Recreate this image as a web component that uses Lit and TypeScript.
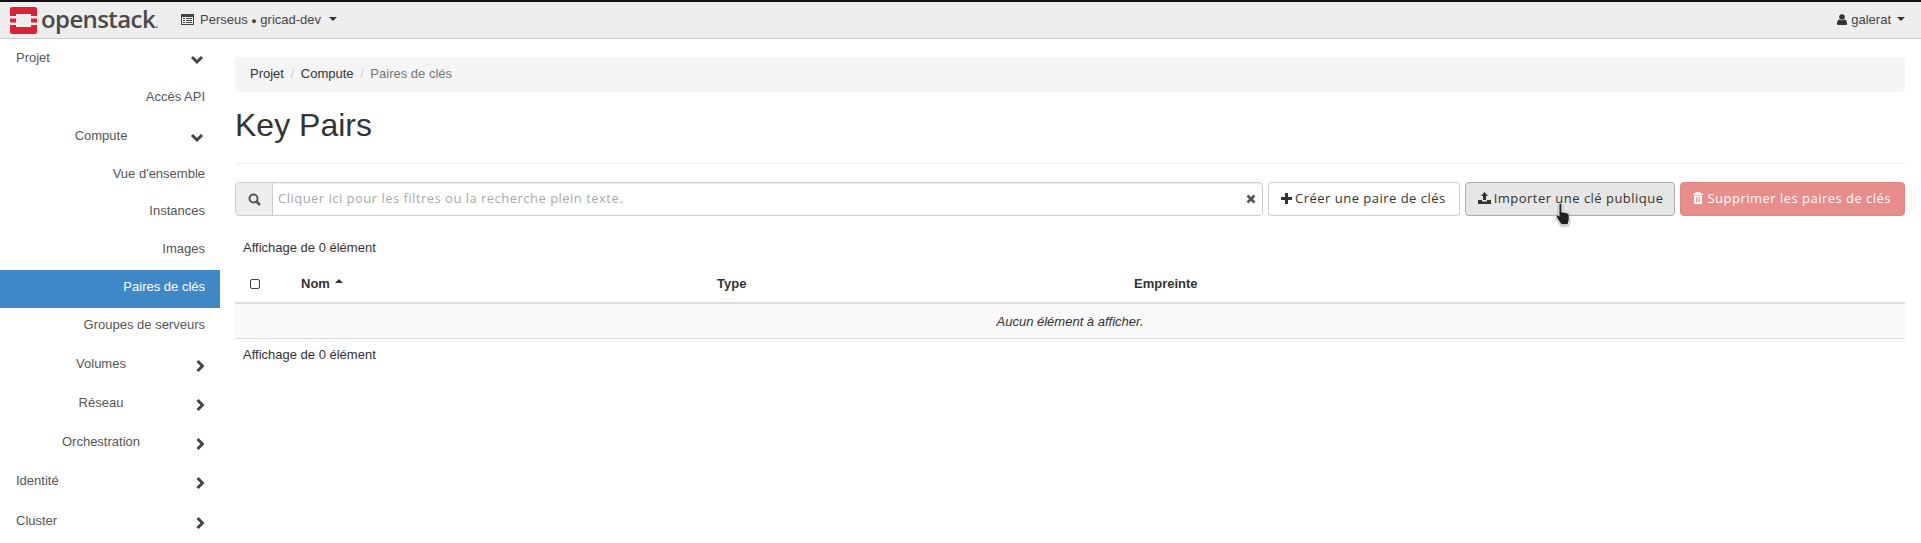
import { LitElement, html, css } from "lit";
import { customElement } from "lit/decorators.js";

const chevDown = html`<svg class="chev" viewBox="0 0 14 10" width="14" height="10"><path d="M2 2 7 7 12 2" fill="none" stroke="#444" stroke-width="3"/></svg>`;
const chevRight = html`<svg class="chev" viewBox="0 0 10 14" width="10" height="14"><path d="M3.500 2 8.500 7 3.500 12" fill="none" stroke="#444" stroke-width="3"/></svg>`;

@customElement("app-root")
export class AppRoot extends LitElement {
  static styles = css`
    :host { display: block; width: 1921px; height: 543px; overflow: hidden; background: #fff; font-family: "Liberation Sans", Arial, sans-serif; font-size: 13px; color: #333; }
    .nav { height: 36px; border-top: 2px solid #111; border-bottom: 1px solid #ccc; background: #eee; display: flex; align-items: center; padding: 0 10px; box-sizing: content-box; color: #444; }
    .logo { display: flex; align-items: center; width: 171px; }
    .wordmark { font-family: "Open Sans", sans-serif; font-weight: 600; font-size: 24px; color: #4a4a4a; margin-left: 4px; margin-bottom: 2px; letter-spacing: -0.6px; line-height: 1; }
    .wordmark i { font-style: normal; font-size: 12px; color: #777; letter-spacing: 0; }
    .proj { display: flex; align-items: center; gap: 6px; padding-bottom: 2px; }
    .right { margin-left: auto; display: flex; align-items: center; gap: 4px; margin-right: 6px; padding-bottom: 2px; }
    .caret { display: inline-block; border-left: 4px solid transparent; border-right: 4px solid transparent; border-top: 4px solid #333; margin-left: 2px; }
    .body { display: flex; }
    .side { width: 220px; flex: none; padding-top: 0.5px; color: #555; }
    .row { height: 39px; padding-bottom: 4px; display: flex; align-items: center; box-sizing: border-box; }
    .row.h395 { height: 39.5px; }
    .row.h385 { height: 38.5px; }
    .row.h375 { height: 37.5px; }
    .row.h38 { height: 38px; }
    .row.wide { height: 39.2px; }
    .row .chev { margin-top: 5px; }
    .row.l0 { padding-left: 16px; justify-content: space-between; padding-right: 16px; }
    .row.l1 { justify-content: flex-end; padding-right: 15px; }
    .row.l1h { display: grid; grid-template-columns: 185px 1fr; }
    .row.l1h span { text-align: center; padding-left: 17px; }
    .row.l1h .chev { justify-self: end; margin-right: 16px; }
    .row.active { height: 38.7px; background: #3f88c8; color: #fff; }
    .row.after { height: 37.7px; padding-bottom: 6px; }
    .main { flex: 1; padding: 18px 16px 0 15px; min-width: 0; }
    .crumb { height: 35px; padding: 0 15px 3px; box-sizing: border-box; background: #f5f5f5; border-radius: 4px; display: flex; align-items: center; gap: 5px; color: #333; }
    .crumb .sep { color: #ccc; margin: 0 1.600px; }
    .crumb .cur { color: #777; }
    h1 { font-weight: 400; font-size: 32px; line-height: 33px; color: #333; margin: 17px 0 21px; }
    hr { border: 0; border-top: 1px solid #eee; margin: 0 0 18px; }
    .bar { display: flex; gap: 5px; height: 34px; font-family: "Open Sans", sans-serif; }
    .search { flex: 1; display: flex; border: 1px solid #ccc; border-radius: 4px; box-sizing: border-box; align-items: center; box-shadow: inset 0 1px 1px rgba(0,0,0,.075); }
    .addon { width: 36px; height: 100%; background: #eee; border-right: 1px solid #ccc; display: flex; align-items: center; justify-content: center; border-radius: 3px 0 0 3px; flex: none; }
    .ph { flex: 1; padding: 0 0 2px 5px; color: #aaa; letter-spacing: .48px; }
    .x { margin-right: 6px; display: flex; }
    .btn { display: flex; align-items: center; gap: 3px; box-sizing: border-box; border: 1px solid #ccc; border-radius: 4px; padding: 0 13px 2px 12px; color: #333; background: #fff; white-space: nowrap; letter-spacing: .48px; }
    .btn.hover { background: #e6e6e6; border-color: #adadad; position: relative; padding-right: 10px; }
    .btn.danger { background: #e78d8b; border-color: #e58583; color: #fff; gap: 5px; padding-right: 13px; }
    .cursor { position: absolute; left: 88px; top: 20px; filter: drop-shadow(0 1px 1px rgba(0,0,0,.4)); }
    .count { height: 20px; line-height: 20px; padding-left: 8px; color: #333; }
    .top-count { margin-top: 22px; }
    .th { display: grid; grid-template-columns: 66px 416px 417px 1fr; height: 37px; align-items: center; font-weight: 700; border-bottom: 2px solid #ddd; margin-top: 7px; color: #333; box-sizing: content-box; }
    .th .cb { width: 8px; height: 8px; border: 1px solid #444; border-radius: 2px; margin-left: 15px; }
    .sort { display: inline-block; border-left: 4px solid transparent; border-right: 4px solid transparent; border-bottom: 4px solid #333; margin-left: 5px; vertical-align: 5px; }
    .empty { height: 34px; background: #f9f9f9; border-bottom: 1px solid #ddd; display: flex; align-items: center; justify-content: center; font-style: italic; }
    .bottom-count { margin-top: 6px; }
  `;
  render() {
    return html`
      <div class="nav">
        <div class="logo">
          <svg width="27" height="27" viewBox="0 0 27 27">
            <path fill="#e01e35" fill-rule="evenodd" d="M2 0h23a2 2 0 0 1 2 2v7h-6V7H6v2H0V2a2 2 0 0 1 2-2zM0 11.500h6v4H0zM21 11.500h6v4h-6zM0 18h6v2h15v-2h6v7a2 2 0 0 1-2 2H2a2 2 0 0 1-2-2z"/>
          </svg>
          <span class="wordmark">openstack<i>.</i></span>
        </div>
        <div class="proj">
          <svg width="13" height="11" viewBox="0 0 13 11"><path fill="#444" fill-rule="evenodd" d="M0 0h13v11H0zM1 3v7h11V3zM2 4h2v1H2zM5 4h6v1H5zM2 6h2v1H2zM5 6h6v1H5zM2 8h2v1H2zM5 8h6v1H5z"/></svg>
          <span>Perseus <span style="font-size:9px">●</span> gricad-dev</span><span class="caret"></span>
        </div>
        <div class="right">
          <svg width="10" height="11" viewBox="0 0 10 11"><circle cx="5" cy="3" r="2.800" fill="#333"/><path fill="#333" d="M0 9.500C0 7 1.500 5.500 2.500 5.500 3.500 6.500 6.500 6.500 7.500 5.500 8.500 5.500 10 7 10 9.500 10 10.500 9.500 11 8.500 11h-7C.5 11 0 10.500 0 9.500z"/></svg>
          <span>galerat</span><span class="caret"></span>
        </div>
      </div>
      <div class="body">
        <div class="side">
          <div class="row l0"><span>Projet</span>${chevDown}</div>
          <div class="row l1 h395">Accès API</div>
          <div class="row l1h h385"><span>Compute</span>${chevDown}</div>
          <div class="row l1 h375">Vue d'ensemble</div>
          <div class="row l1 h375">Instances</div>
          <div class="row l1 h38">Images</div>
          <div class="row l1 active">Paires de clés</div>
          <div class="row l1 after">Groupes de serveurs</div>
          <div class="row l1h"><span>Volumes</span>${chevRight}</div>
          <div class="row l1h wide"><span>Réseau</span>${chevRight}</div>
          <div class="row l1h wide"><span>Orchestration</span>${chevRight}</div>
          <div class="row l0 wide"><span>Identité</span>${chevRight}</div>
          <div class="row l0 wide"><span>Cluster</span>${chevRight}</div>
        </div>
        <div class="main">
          <div class="crumb"><span>Projet</span><span class="sep">/</span><span>Compute</span><span class="sep">/</span><span class="cur">Paires de clés</span></div>
          <h1>Key Pairs</h1>
          <hr />
          <div class="bar">
            <div class="search">
              <div class="addon"><svg width="13" height="13" viewBox="0 0 13 13"><circle cx="5.500" cy="5.500" r="4" fill="none" stroke="#555" stroke-width="2"/><path d="M8.500 8.500 12 12" stroke="#555" stroke-width="2.500"/></svg></div>
              <div class="ph">Cliquer ici pour les filtres ou la recherche plein texte.</div>
              <div class="x"><svg width="10" height="10" viewBox="0 0 10 10"><path d="M1.500 1.500l7 7m0-7l-7 7" stroke="#555" stroke-width="2.600"/></svg></div>
            </div>
            <div class="btn"><svg width="11" height="11" viewBox="0 0 11 11"><path d="M5.500 0v11M0 5.500h11" stroke="#333" stroke-width="3"/></svg>Créer une paire de clés</div>
            <div class="btn hover"><svg width="13" height="12" viewBox="0 0 13 12"><path fill="#333" d="M6.500 0 10 4H8v4H5V4H3zM0 8h4v1.500h5V8h4v4H0z"/></svg>Importer une clé publique
              <svg class="cursor" width="19" height="24" viewBox="0 0 16 21"><path fill="#222" stroke="#fff" stroke-width="0.800" d="M4 1.500a1.300 1.300 0 0 1 2.600 0V8l1-.2 1.400.3 1.400.3 1.400.6 1.200.8V15l-1 4H6l-4-6-.8-2.500L2.500 10 4 11.500z"/></svg>
            </div>
            <div class="btn danger"><svg width="10" height="12" viewBox="0 0 10 12"><path fill="#fff" fill-rule="evenodd" d="M3 0h4l1 1.500h2v1.200H0V1.500h2zM1 3.500h8V11a1 1 0 0 1-1 1H2a1 1 0 0 1-1-1zM3 5v5h.8V5zM4.600 5v5h.8V5zM6.200 5v5H7V5z"/></svg>Supprimer les paires de clés</div>
          </div>
          <div class="count top-count">Affichage de 0 élément</div>
          <div class="th">
            <div><div class="cb"></div></div>
            <div>Nom<span class="sort"></span></div>
            <div>Type</div>
            <div>Empreinte</div>
          </div>
          <div class="empty">Aucun élément à afficher.</div>
          <div class="count bottom-count">Affichage de 0 élément</div>
        </div>
      </div>
    `;
  }
}
